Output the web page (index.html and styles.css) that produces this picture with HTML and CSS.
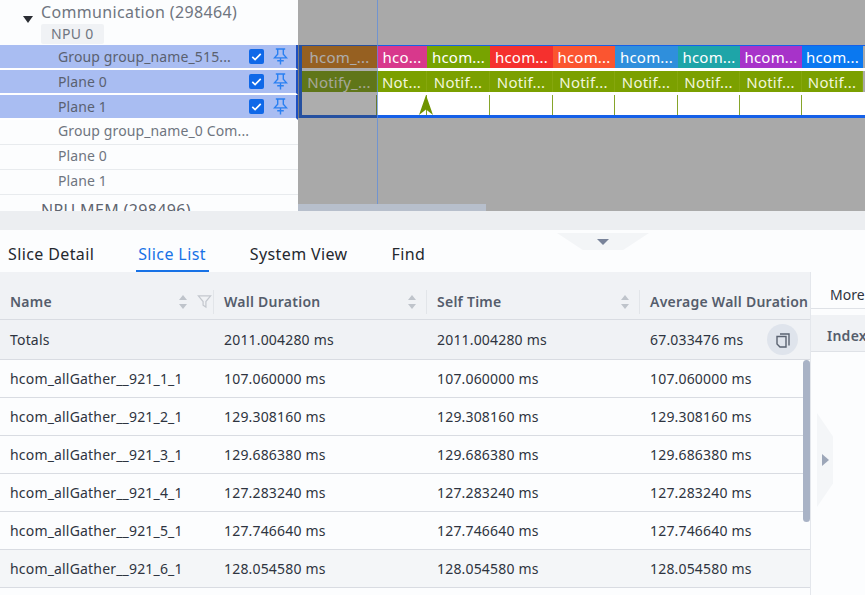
FILE: index.html
```html
<!DOCTYPE html>
<html lang="en">
<head>
<meta charset="utf-8">
<title>Slice List</title>
<link rel="stylesheet" href="styles.css">
</head>
<body>
<svg class="defs" width="0" height="0" aria-hidden="true">
  <symbol id="pin" viewBox="0 0 16 18"><path d="M3 1h10M5 1v5.500L1.500 10.500h13L11 6.500V1M8 10.500V17.500M4.500 13.500h7" fill="none" stroke="currentColor" stroke-width="1.500"/></symbol>
  <symbol id="check" viewBox="0 0 16 16"><path d="M3.500 8.500l3 2.800 6-6" fill="none" stroke="#fff" stroke-width="1.800"/></symbol>
  <symbol id="sort" viewBox="0 0 10 16"><path d="M5 1l4 5H1zM5 15l4-5H1z" fill="#bfc4cb"/></symbol>
</svg>
<section class="top">
  <div class="tree">
    <div class="group-head"><span class="caret"></span><span>Communication (298464)</span></div>
    <div class="npu"><span>NPU 0</span></div>
    <div class="row sel"><span class="label">Group group_name_515...</span><span class="box"><svg><use href="#check"/></svg></span><svg class="pin"><use href="#pin"/></svg></div>
    <div class="row sel"><span class="label">Plane 0</span><span class="box"><svg><use href="#check"/></svg></span><svg class="pin"><use href="#pin"/></svg></div>
    <div class="row sel"><span class="label">Plane 1</span><span class="box"><svg><use href="#check"/></svg></span><svg class="pin"><use href="#pin"/></svg></div>
    <div class="row"><span class="label">Group group_name_0 Com...</span></div>
    <div class="row"><span class="label">Plane 0</span></div>
    <div class="row"><span class="label">Plane 1</span></div>
    <div class="group-head mem"><span>NPU MEM (298496)</span></div>
  </div>
  <div class="timeline">
    <div class="frame">
      <div class="track t1">
        <span class="w1 c0">hcom_...</span><span class="w2 c1">hco...</span><span class="w3 c2">hcom...</span><span class="w3 c3">hcom...</span><span class="w4 c4">hcom...</span><span class="w3 c5">hcom...</span><span class="w4 c6">hcom...</span><span class="w4 c7">hcom...</span><span class="w5 c8">hcom...</span>
      </div>
      <div class="track t2">
        <span class="w1">Notify_...</span><span class="w2">Not...</span><span class="w3">Notif...</span><span class="w3">Notif...</span><span class="w4">Notif...</span><span class="w3">Notif...</span><span class="w4">Notif...</span><span class="w4">Notif...</span><span class="w5">Notif...</span>
      </div>
      <div class="track t3">
        <i class="w1"></i><i class="w2"><b class="arrow"></b></i><i class="w3"></i><i class="w3"></i><i class="w4"></i><i class="w3"></i><i class="w4"></i><i class="w4"></i><i class="w5"></i>
      </div>
    </div>
    <div class="shade"></div>
    <div class="cursor"></div>
    <div class="scroll"></div>
  </div>
</section>
<div class="band"></div>
<section class="bottom">
  <span class="collapse"><b></b></span>
  <nav class="tabs">
    <a>Slice Detail</a><a class="active">Slice List</a><a>System View</a><a>Find</a>
  </nav>
  <div class="panes">
    <div class="list">
      <div class="tr head">
        <div class="td name">Name<svg class="sorti"><use href="#sort"/></svg><svg class="filter" viewBox="0 0 16 16"><path d="M1.500 2h13L9.500 8v6l-3-2V8z" fill="none" stroke="#c4c8ce" stroke-width="1.300"/></svg></div>
        <div class="td">Wall Duration<svg class="sorti"><use href="#sort"/></svg></div>
        <div class="td">Self Time<svg class="sorti"><use href="#sort"/></svg></div>
        <div class="td last">Average Wall Duration</div>
      </div>
      <div class="tr totals">
        <div class="td name">Totals</div><div class="td">2011.004280 ms</div><div class="td">2011.004280 ms</div>
        <div class="td last">67.033476 ms<span class="copy"><svg viewBox="0 0 16 16"><path d="M5 2h9v11.500M2 4.500h9v10.500H5l-3-3z" fill="none" stroke="#5a6270" stroke-width="1.400"/></svg></span></div>
      </div>
      <div class="tr"><div class="td name">hcom_allGather__921_1_1</div><div class="td">107.060000 ms</div><div class="td">107.060000 ms</div><div class="td last">107.060000 ms</div></div>
      <div class="tr"><div class="td name">hcom_allGather__921_2_1</div><div class="td">129.308160 ms</div><div class="td">129.308160 ms</div><div class="td last">129.308160 ms</div></div>
      <div class="tr"><div class="td name">hcom_allGather__921_3_1</div><div class="td">129.686380 ms</div><div class="td">129.686380 ms</div><div class="td last">129.686380 ms</div></div>
      <div class="tr"><div class="td name">hcom_allGather__921_4_1</div><div class="td">127.283240 ms</div><div class="td">127.283240 ms</div><div class="td last">127.283240 ms</div></div>
      <div class="tr"><div class="td name">hcom_allGather__921_5_1</div><div class="td">127.746640 ms</div><div class="td">127.746640 ms</div><div class="td last">127.746640 ms</div></div>
      <div class="tr alt"><div class="td name">hcom_allGather__921_6_1</div><div class="td">128.054580 ms</div><div class="td">128.054580 ms</div><div class="td last">128.054580 ms</div></div>
      <div class="thumb"></div>
    </div>
    <aside class="more">
      <div class="more-tab">More</div>
      <div class="more-head">Index</div>
      <span class="expand"><b></b></span>
    </aside>
  </div>
</section>
</body>
</html>
```
FILE: styles.css
```css
* { box-sizing: border-box; }
html, body { margin: 0; height: 100%; }
body {
  width: 865px;
  height: 595px;
  overflow: hidden;
  background: #fcfdfe;
  color: #2f3540;
  font-family: "Noto Sans", "Open Sans", sans-serif;
  font-size: 14px;
}
.defs { position: absolute; }

.top { display: flex; height: 211px; overflow: hidden; }
.tree { width: 298px; flex: none; color: #6f7580; }
.group-head { display: flex; align-items: center; height: 24px; font-size: 16px; letter-spacing: .35px; padding-left: 41px; position: relative; white-space: nowrap; }
.caret {
  position: absolute; left: 23px; top: 16px;
  border: 5px solid transparent; border-top: 7px solid #2a2d33; border-bottom: 0;
}
.npu { height: 21px; padding-left: 41px; }
.npu span { display: inline-block; padding: 0 10px; background: #f0f2f5; height: 20px; line-height: 19px; border-radius: 2px; letter-spacing: .3px; }
.row {
  height: 25px; display: flex; align-items: center; padding: 0 9px 4px 58px;
  border-bottom: 1px solid #e8ebee; white-space: nowrap;
  font-size: 14px; letter-spacing: .12px;
}
.row.sel { background: #a9bdf2; border-bottom: 2px solid #fff; color: #5a6170; border-right: 2px solid #1d4fc0; padding: 0 8px 1px 58px; }
.label { flex: 1; }
.box { width: 15px; height: 15px; background: #0f68e8; border-radius: 2px; margin-right: 9px; display: flex; }
.box svg { width: 15px; height: 15px; }
.pin { width: 15px; height: 17px; color: #2a80f2; }
.mem { height: 24px; margin-top: 3px; color: #5f6570; }

.timeline { flex: 1; background: #a9a9a9; position: relative; padding-top: 45px; }
.frame { height: 73px; margin-left: 1px; border: 3px solid #1560e8; border-right: 0; border-top-width: 1px; background: #fff; display: flex; flex-direction: column; }
.track { display: flex; color: #fff; font-size: 15px; letter-spacing: .2px; white-space: nowrap; background: #a9a9a9; }
.track span { display: flex; align-items: center; justify-content: center; overflow: hidden; }
.t1 { height: 22px; }
.t2 { height: 21px; margin-top: 3px; color: #f2f6dc; }
.t2 span { background: #7ba000; border-right: 1px solid #86a70d; }
.t3 { flex: 1; margin-top: 3px; background: #fff; }
.t3 i { display: block; height: 100%; border-right: 1px solid #86a52a; position: relative; }
.t3 i:last-child { border-right: 0; }
.w1 { width: 75px; }
.w2 { width: 50px; }
.w3 { width: 63px; }
.w4 { width: 62px; }
.w5 { width: 61px; }
.c0 { background: #d87a0e; }
.c1 { background: #d8388c; }
.c2 { background: #77a300; }
.c3 { background: #f5302e; }
.c4 { background: #fb5530; }
.c5 { background: #2f8fdc; }
.c6 { background: #1ea5a8; }
.c7 { background: #a733c9; }
.c8 { background: #0a78f0; }
.arrow {
  position: absolute; left: 42px; bottom: 0; width: 14px; height: 20px;
  background: #6f9400; clip-path: polygon(50% 0, 100% 100%, 50% 72%, 0 100%);
}
.shade { position: absolute; left: 0; top: 45px; width: 79px; height: 73px; background: rgba(60,60,60,.42); }
.cursor { position: absolute; left: 79px; top: 0; bottom: 0; border-left: 1px solid rgba(90,140,225,.7); }
.scroll { position: absolute; left: 0; bottom: 0; width: 188px; height: 7px; background: #b7bfcc; }

.band { height: 19px; background: #eceef1; }

.bottom { position: relative; height: 365px; }
.collapse {
  position: absolute; left: 557px; top: 3px; width: 92px; height: 17px;
  background: #f3f5f7; clip-path: polygon(0 0, 100% 0, 72% 100%, 28% 100%);
}
.collapse b { position: absolute; left: 40px; top: 6px; border: 6px solid transparent; border-top: 6px solid #79839a; border-bottom: 0; }
.tabs { display: flex; height: 42px; padding-left: 8px; gap: 44px; font-size: 16px; letter-spacing: .38px; color: #24282f; }
.tabs a { display: block; line-height: 48px; height: 42px; white-space: nowrap; }
.tabs .active { color: #1872e6; position: relative; }
.tabs .active::after { content: ""; position: absolute; left: -2px; right: -3px; bottom: 0; height: 2px; background: #1872e6; }

.panes { display: flex; height: 323px; }
.list { width: 811px; flex: none; position: relative; overflow: hidden; border-right: 1px solid #e4e7ec; }
.tr { display: flex; height: 38px; border-bottom: 1px solid #d9dce2; align-items: center; color: #2e3440; letter-spacing: .18px; }
.td { width: 213px; flex: none; padding-left: 10px; display: flex; align-items: center; height: 100%; position: relative; white-space: nowrap; }
.name { width: 214px; }
.last { flex: 1; width: auto; padding-left: 10px; }
.head { height: 48px; padding-top: 12px; background: #f0f2f5; font-weight: 600; color: #555d6c; letter-spacing: .25px; }
.head .td::after { content: ""; position: absolute; right: 0; top: 6px; height: 24px; border-right: 1px solid #e2e5e9; }
.head .last::after { display: none; }
.totals { height: 40px; background: #f0f2f5; }
.alt { background: #f4f6f8; }
.sorti { position: absolute; right: 26px; width: 10px; height: 16px; }
.td:not(.name) > .sorti { right: 10px; }
.filter { position: absolute; right: 2px; width: 15px; height: 15px; }
.copy { position: absolute; right: 12px; top: 4px; width: 31px; height: 31px; border-radius: 50%; background: #dfe4ec; display: flex; align-items: center; justify-content: center; }
.copy svg { width: 16px; height: 16px; }
.thumb { position: absolute; right: 0; top: 88px; width: 7px; height: 162px; border-radius: 4px; background: #a9b3c6; }

.more { flex: 1; position: relative; min-width: 0; }
.more-tab { height: 37px; padding-left: 19px; line-height: 46px; border-bottom: 1px solid #dfe2e7; white-space: nowrap; color: #2e3440; overflow: hidden; }
.more-head { height: 37px; margin-top: 6px; padding-left: 16px; line-height: 41px; font-weight: 600; letter-spacing: .25px; background: #f0f2f5; color: #555d6c; border-bottom: 1px solid #dfe2e7; overflow: hidden; }
.expand { position: absolute; left: 6px; top: 141px; width: 16px; height: 94px; background: #f4f6f8; clip-path: polygon(0 0, 100% 25%, 100% 75%, 0 100%); }
.expand b { position: absolute; left: 5px; top: 41px; border: 6px solid transparent; border-left: 7px solid #9ca6b8; border-right: 0; }
```
